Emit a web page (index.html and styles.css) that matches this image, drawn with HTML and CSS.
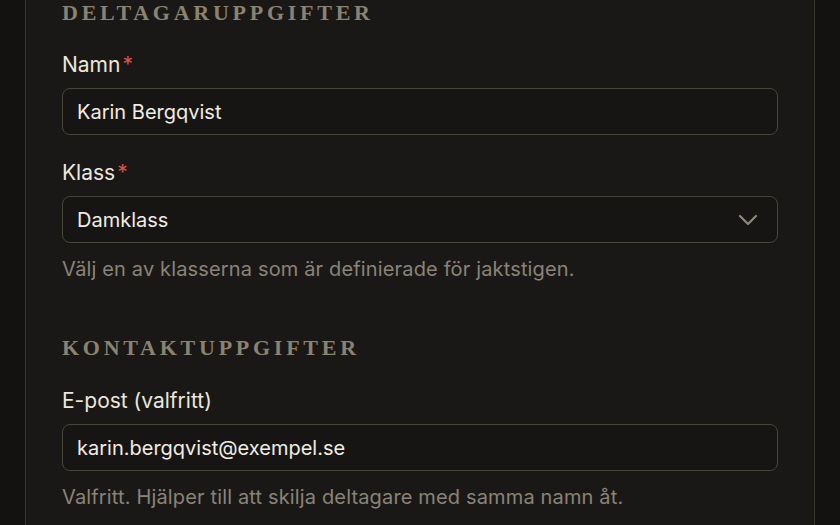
FILE: index.html
```html
<!DOCTYPE html>
<html lang="sv">
<head>
<meta charset="utf-8">
<title>Deltagaruppgifter</title>
<link rel="stylesheet" href="styles.css">
</head>
<body>
<div class="card">
  <section class="section">
    <h2 class="section-title">Deltagaruppgifter</h2>
    <div class="field">
      <label class="label">Namn<span class="req">*</span></label>
      <div class="input">Karin Bergqvist</div>
    </div>
    <div class="field">
      <label class="label">Klass<span class="req">*</span></label>
      <div class="input select">
        <span>Damklass</span>
        <svg class="chevron" width="20" height="12" viewBox="0 0 20 12"><path d="M2 2 L10 10 L18 2" fill="none" stroke="#8f887c" stroke-width="2.2" stroke-linecap="round" stroke-linejoin="round"/></svg>
      </div>
      <p class="hint">Välj en av klasserna som är definierade för jaktstigen.</p>
    </div>
  </section>
  <section class="section">
    <h2 class="section-title">Kontaktuppgifter</h2>
    <div class="field">
      <label class="label">E-post (valfritt)</label>
      <div class="input">karin.bergqvist@exempel.se</div>
      <p class="hint">Valfritt. Hjälper till att skilja deltagare med samma namn åt.</p>
    </div>
  </section>
</div>
</body>
</html>
```
FILE: styles.css
```css
html, body {
  margin: 0;
  padding: 0;
  background: #141210;
  height: 100%;
  overflow: hidden;
}
body {
  font-family: Inter, "Noto Sans", sans-serif;
  color: #ece7de;
}
.card {
  margin: 0 25px;
  min-height: 100%;
  background: #1a1816;
  border-left: 1px solid #3a362f;
  border-right: 1px solid #3a362f;
  padding: 0 36px;
  box-sizing: border-box;
}
.section-title {
  margin: 0;
  font-family: "Liberation Serif", serif;
  font-weight: bold;
  font-size: 22px;
  line-height: 26px;
  letter-spacing: 0.17em;
  text-transform: uppercase;
  color: #8b8372;
}
.section + .section {
  margin-top: 52px;
}
.field {
  margin-top: 24px;
}
.section-title + .field {
  margin-top: 25px;
}
.section + .section .section-title + .field {
  margin-top: 26px;
}
.label {
  display: block;
  font-size: 21px;
  line-height: 28px;
  font-weight: 400;
  color: #ece7de;
  margin-bottom: 9px;
}
.req {
  color: #d9534a;
  margin-left: 2px;
}
.input {
  height: 47px;
  box-sizing: border-box;
  border: 1px solid #4a453c;
  border-radius: 8px;
  background: #171513;
  padding: 0 14px;
  display: flex;
  align-items: center;
  font-size: 20px;
  color: #f1ece4;
}
.select {
  justify-content: space-between;
  padding-right: 19px;
}
.chevron {
  display: block;
}
.hint {
  margin: 12px 0 0;
  font-size: 20px;
  line-height: 28px;
  letter-spacing: 0.15px;
  color: #8a8378;
}
```
